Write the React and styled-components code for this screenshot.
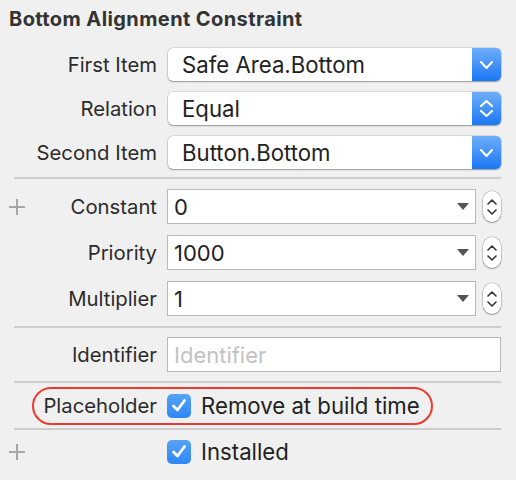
import React from "react";
import styled, { createGlobalStyle } from "styled-components";

const Global = createGlobalStyle`
  html, body { margin: 0; padding: 0; background: #f0f0f0; }
  body { font-family: Inter, "Liberation Sans", sans-serif; }
`;

const Panel = styled.div`
  width: 516px;
  height: 480px;
  background: #f0f0f0;
  box-sizing: border-box;
  padding: 0 15px 0 0;
  color: #262626;
  overflow: hidden;
`;

const Title = styled.div`
  font-weight: 700;
  font-size: 20px;
  letter-spacing: 0.4px;
  color: #333;
  padding: 7px 0 0 9px;
  height: 40px;
  line-height: 25px;
  box-sizing: border-box;
  white-space: nowrap;
`;

const Group = styled.div`
  display: flex;
  flex-direction: column;
  gap: ${(p) => p.$gap || 0}px;
  margin-top: ${(p) => p.$top || 0}px;
`;

const Row = styled.div`
  position: relative;
  display: grid;
  grid-template-columns: 157px 1fr;
  column-gap: 10px;
  align-items: center;
  height: ${(p) => p.$h}px;
`;

const Label = styled.div`
  text-align: right;
  font-size: 20.3px;
  color: #2b2b2b;
  white-space: nowrap;
`;

const Plus = styled.span`
  position: absolute;
  left: 9px;
  top: 50%;
  transform: translateY(-50%);
  width: 16px;
  height: 16px;
  &::before, &::after {
    content: "";
    position: absolute;
    background: #a6a6a6;
  }
  &::before { left: 0; right: 0; top: 7px; height: 2px; }
  &::after { top: 0; bottom: 0; left: 7px; width: 2px; }
`;

const Popup = styled.div`
  display: flex;
  height: 33px;
  margin-left: 1px;
  background: #fff;
  border-radius: 5px;
  box-shadow: 0 0 0 0.5px rgba(0,0,0,0.18), 0 1px 1.5px rgba(0,0,0,0.3);
  overflow: hidden;
`;

const PopupText = styled.div`
  flex: 1;
  padding-left: 14px;
  font-size: 22.2px;
  line-height: 33px;
  color: #222;
`;

const PopupArrow = styled.div`
  width: 29px;
  display: flex;
  flex-direction: column;
  align-items: center;
  justify-content: center;
  gap: 3px;
  background: linear-gradient(#6eaefa, #1a78f5);
`;

const Combo = styled.div`
  display: grid;
  grid-template-columns: 1fr 18px;
  column-gap: 7px;
  align-items: center;
`;

const ComboField = styled.div`
  height: 35px;
  box-sizing: border-box;
  border: 1px solid #b8b8b8;
  background: #fff;
  display: flex;
  align-items: center;
  padding: 0 6px 0 6px;
  font-size: 22px;
  color: ${(p) => (p.$placeholder ? "#c2c2c2" : "#222")};
`;

const ComboValue = styled.span`
  flex: 1;
`;

const Triangle = styled.span`
  width: 0;
  height: 0;
  border-left: 6px solid transparent;
  border-right: 6px solid transparent;
  border-top: 7px solid #555;
`;

const Stepper = styled.div`
  height: 31px;
  width: 18px;
  box-sizing: border-box;
  border-radius: 9px;
  background: #fff;
  box-shadow: 0 0 0 0.5px rgba(0,0,0,0.25), 0 1px 1.5px rgba(0,0,0,0.3);
  display: flex;
  flex-direction: column;
  align-items: center;
  justify-content: center;
  gap: 4px;
`;

const Divider = styled.div`
  height: 2px;
  background: #cdcdcd;
  margin: ${(p) => p.$top}px 0 0 14px;
`;

const CheckRow = styled.div`
  display: flex;
  align-items: center;
  gap: 10px;
  font-size: 22.2px;
  color: #222;
`;

const Box = styled.span`
  width: 24px;
  height: 24px;
  border-radius: 5px;
  background: linear-gradient(#55a2f8, #2f87f4);
  display: flex;
  align-items: center;
  justify-content: center;
`;

const Highlight = styled.div`
  position: absolute;
  left: 32px;
  width: 401px;
  top: 50%;
  height: 38px;
  transform: translateY(-50%);
  box-sizing: border-box;
  border: 2.5px solid #ee3a2e;
  border-radius: 19px;
  pointer-events: none;
`;

const Chevron = ({ up, color = "#fff", w = 12, h = 7, sw = 2.2 }) => (
  <svg width={w} height={h} viewBox={`0 0 ${w} ${h}`}>
    <polyline
      points={
        up
          ? `1,${h - 1} ${w / 2},1 ${w - 1},${h - 1}`
          : `1,1 ${w / 2},${h - 1} ${w - 1},1`
      }
      fill="none"
      stroke={color}
      strokeWidth={sw}
      strokeLinecap="round"
      strokeLinejoin="round"
    />
  </svg>
);

const Check = () => (
  <svg width="16" height="15" viewBox="0 0 16 15">
    <polyline
      points="2.5,8 6.5,12 13.5,2.5"
      fill="none"
      stroke="#fff"
      strokeWidth="2.8"
      strokeLinecap="round"
      strokeLinejoin="round"
    />
  </svg>
);

const PopupRow = ({ label, value, updown }) => (
  <Row $h={33}>
    <Label>{label}</Label>
    <Popup>
      <PopupText>{value}</PopupText>
      <PopupArrow>
        {updown ? (
          <>
            <Chevron up w={13} h={7} />
            <Chevron w={13} h={7} />
          </>
        ) : (
          <Chevron w={13} h={8} />
        )}
      </PopupArrow>
    </Popup>
  </Row>
);

const ComboRow = ({ label, value, plus }) => (
  <Row $h={35}>
    {plus && <Plus />}
    <Label>{label}</Label>
    <Combo>
      <ComboField>
        <ComboValue>{value}</ComboValue>
        <Triangle />
      </ComboField>
      <Stepper>
        <Chevron up color="#333" w={10} h={6} sw={1.6} />
        <Chevron color="#333" w={10} h={6} sw={1.6} />
      </Stepper>
    </Combo>
  </Row>
);

export default function App() {
  return (
    <>
      <Global />
      <Panel>
        <Title>Bottom Alignment Constraint</Title>
        <Group $top={8} $gap={11}>
          <PopupRow label="First Item" value="Safe Area.Bottom" />
          <PopupRow label="Relation" value="Equal" updown />
          <PopupRow label="Second Item" value="Button.Bottom" />
        </Group>
        <Divider $top={8} />
        <Group $top={10} $gap={11}>
          <ComboRow label="Constant" value="0" plus />
          <ComboRow label="Priority" value="1000" />
          <ComboRow label="Multiplier" value="1" />
        </Group>
        <Divider $top={10} />
        <Group $top={9}>
          <Row $h={35}>
            <Label>Identifier</Label>
            <ComboField $placeholder>Identifier</ComboField>
          </Row>
        </Group>
        <Divider $top={9} />
        <Row $h={45}>
          <Highlight />
          <Label>Placeholder</Label>
          <CheckRow>
            <Box>
              <Check />
            </Box>
            Remove at build time
          </CheckRow>
        </Row>
        <Divider $top={0} />
        <Row $h={43}>
          <Plus />
          <span />
          <CheckRow>
            <Box>
              <Check />
            </Box>
            Installed
          </CheckRow>
        </Row>
      </Panel>
    </>
  );
}
